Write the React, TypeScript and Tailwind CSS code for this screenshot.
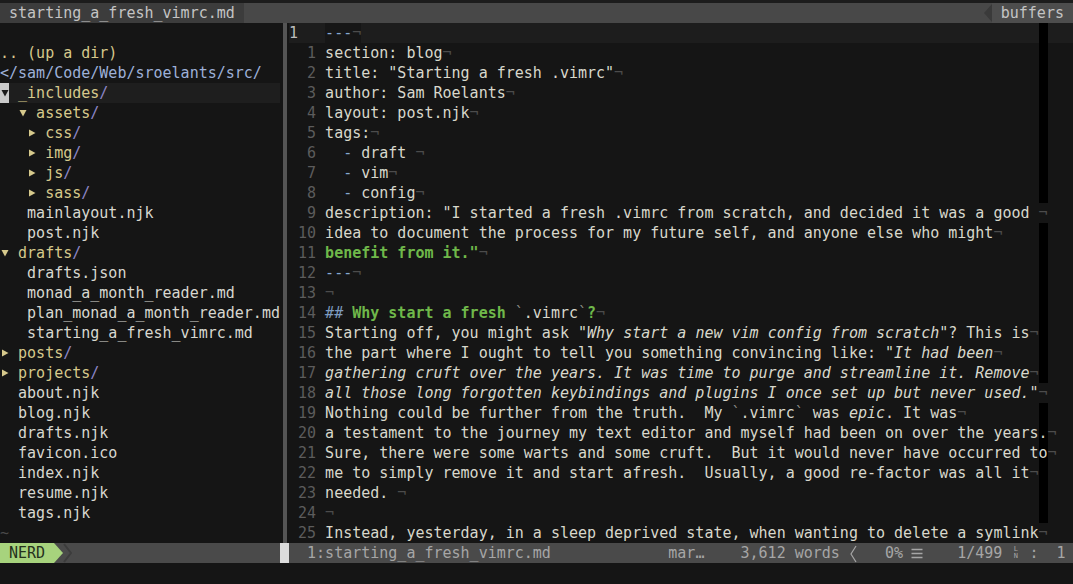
import clsx from "clsx";

type Seg = [string, string];
type Line = string | Seg[];

const tone: Record<string, string> = {
  n: "text-[#d8d8cc]",
  b: "text-[#86a8d0]",
  g: "text-[#6fb84a] font-bold",
  i: "text-[#d8d8cc] italic",
  h: "text-[#7e9cc0]",
  q: "text-[#8c8c86]",
  up: "text-[#d6c98c]",
  path: "text-[#9db0d8]",
  dir: "text-[#d6c98c]",
  slash: "text-[#8d86c6]",
  file: "text-[#d8d8d0]",
  dim: "text-[#4a4a4a]",
};

const lines: Line[] = [
  "section: blog",
  'title: "Starting a fresh .vimrc"',
  "author: Sam Roelants",
  "layout: post.njk",
  "tags:",
  [["n", "  "], ["b", "-"], ["n", " draft "]],
  [["n", "  "], ["b", "-"], ["n", " vim"]],
  [["n", "  "], ["b", "-"], ["n", " config"]],
  'description: "I started a fresh .vimrc from scratch, and decided it was a good ',
  "idea to document the process for my future self, and anyone else who might",
  [["g", 'benefit from it."']],
  [["b", "---"]],
  "",
  [["h", "## "], ["g", "Why start a fresh "], ["q", "`"], ["n", ".vimrc"], ["q", "`"], ["g", "?"]],
  [["n", "Starting off, you might ask "], ["i", '"Why start a new vim config from scratch"'], ["n", "? This is"]],
  [["n", "the part where I ought to tell you something convincing like: "], ["i", '"It had been']],
  [["i", "gathering cruft over the years. It was time to purge and streamline it. Remove"]],
  [["i", 'all those long forgotten keybindings and plugins I once set up but never used."']],
  [
    ["n", "Nothing could be further from the truth.  My "],
    ["q", "`"],
    ["n", ".vimrc"],
    ["q", "`"],
    ["n", " was "],
    ["i", "epic"],
    ["n", ". It was"],
  ],
  "a testament to the journey my text editor and myself had been on over the years.",
  "Sure, there were some warts and some cruft.  But it would never have occurred to",
  "me to simply remove it and start afresh.  Usually, a good re-factor was all it",
  "needed. ",
  "",
  "Instead, yesterday, in a sleep deprived state, when wanting to delete a symlink",
];

type Node = { pad: string; arrow?: "open" | "closed"; name: string; dir?: boolean };

const tree: Node[] = [
  { pad: "  ", arrow: "open", name: "assets", dir: true },
  { pad: "   ", arrow: "closed", name: "css", dir: true },
  { pad: "   ", arrow: "closed", name: "img", dir: true },
  { pad: "   ", arrow: "closed", name: "js", dir: true },
  { pad: "   ", arrow: "closed", name: "sass", dir: true },
  { pad: "   ", name: "mainlayout.njk" },
  { pad: "   ", name: "post.njk" },
  { pad: "", arrow: "open", name: "drafts", dir: true },
  { pad: "   ", name: "drafts.json" },
  { pad: "   ", name: "monad_a_month_reader.md" },
  { pad: "   ", name: "plan_monad_a_month_reader.md" },
  { pad: "   ", name: "starting_a_fresh_vimrc.md" },
  { pad: "", arrow: "closed", name: "posts", dir: true },
  { pad: "", arrow: "closed", name: "projects", dir: true },
  { pad: "  ", name: "about.njk" },
  { pad: "  ", name: "blog.njk" },
  { pad: "  ", name: "drafts.njk" },
  { pad: "  ", name: "favicon.ico" },
  { pad: "  ", name: "index.njk" },
  { pad: "  ", name: "resume.njk" },
  { pad: "  ", name: "tags.njk" },
];

const toSegs = (l: Line): Seg[] => (typeof l === "string" ? [["n", l]] : l);

function Eol() {
  return <span className="text-[#4c4c4c]">¬</span>;
}

function EditorLine({ num, line, current }: { num: string; line: Line; current?: boolean }) {
  const segs = toSegs(line);
  const len = segs.reduce((a, s) => a + s[1].length, 0);
  // colorcolumn disappears where the eol marker lands on it
  const bar = len !== 79;
  return (
    <div
      className={clsx(
        "flex h-[20px] whitespace-pre",
        current && "bg-[#1d1d1d]",
        bar && "bg-[linear-gradient(to_right,transparent_83ch,#000_83ch,#000_84ch,transparent_84ch)]"
      )}
    >
      <span
        className={clsx(
          "w-[4ch] shrink-0",
          current ? "text-[#bcbcbc]" : "text-right pr-[1ch] text-[#5c5c5c]"
        )}
      >
        {num}
      </span>
      <span className={clsx(current && "bg-[#161616]")}>
        {segs.map(([k, t], i) => (
          <span key={i} className={tone[k]}>
            {t}
          </span>
        ))}
        <Eol />
      </span>
    </div>
  );
}

function Arrow({ open, cursor }: { open: boolean; cursor?: boolean }) {
  const fill = cursor ? "#1a1a1a" : "#d6c98c";
  return (
    <span
      className={clsx(
        "inline-flex h-[20px] w-[1ch] items-center justify-center align-top",
        cursor && "bg-[#c9c9c9]"
      )}
    >
      <svg width="8" height="8" viewBox="0 0 8 8">
        {open ? <polygon points="0.5,1 7.5,1 4,7.5" fill={fill} /> : <polygon points="1,0.5 7.5,4 1,7.5" fill={fill} />}
      </svg>
    </span>
  );
}

function NerdTree() {
  return (
    <div className="w-[280px] shrink-0 whitespace-pre">
      <div className="h-[20px]" />
      <div className={clsx("h-[20px]", tone.up)}>.. (up a dir)</div>
      <div className={clsx("h-[20px]", tone.path)}>{"</sam/Code/Web/sroelants/src/"}</div>
      <div className="h-[20px] bg-[#1e1e1e]">
        <Arrow open cursor /> <span className={tone.dir}>_includes</span>
        <span className={tone.slash}>/</span>
      </div>
      {tree.map((n, i) => (
        <div key={i} className="h-[20px]">
          {n.pad}
          {n.arrow && (
            <>
              <Arrow open={n.arrow === "open"} />{" "}
            </>
          )}
          {n.dir ? (
            <>
              <span className={tone.dir}>{n.name}</span>
              <span className={tone.slash}>/</span>
            </>
          ) : (
            <span className={tone.file}>{n.name}</span>
          )}
        </div>
      ))}
      <div className={clsx("h-[20px]", tone.dim)}>~</div>
    </div>
  );
}

function TabLine() {
  return (
    <div className="flex h-[20px] bg-[#484848] text-[#c4c4c4] whitespace-pre">
      <span className="bg-[#3c3c3c]"> starting_a_fresh_vimrc.md </span>
      <span className="flex-1" />
      <svg width="9" height="20" viewBox="0 0 9 20" className="shrink-0">
        <rect width="9" height="20" fill="#484848" />
        <polygon points="9,1 1,10 9,19" fill="#3a3a3a" />
      </svg>
      <span className="bg-[#4d4d4d]"> buffers </span>
    </div>
  );
}

function Cell({ children }: { children: React.ReactNode }) {
  return <span className="inline-flex h-[20px] w-[1ch] items-center justify-center align-top">{children}</span>;
}

function StatusLine() {
  return (
    <div className="flex h-[20px] whitespace-pre">
      <div className="flex w-[280px] shrink-0 bg-[#4a4a4a]">
        <span className="bg-[#a7d37d] text-[#25311c]"> NERD </span>
        <svg width="18" height="20" viewBox="0 0 18 20" className="shrink-0">
          <polygon points="0,0 9,10 0,20" fill="#a7d37d" />
          <polyline points="10,1 17,10 10,19" fill="none" stroke="#3c3c3c" strokeWidth="2" />
        </svg>
      </div>
      <div className="w-[9px] shrink-0 bg-[#dcdcdc]" />
      <div className="flex-1 bg-[#4a4a4a] text-[#a6a6a6]">
        {"  1:starting_a_fresh_vimrc.md             mar"}
        <Cell>…</Cell>
        {"    3,612 words "}
        <Cell>
          <svg width="9" height="20" viewBox="0 0 9 20">
            <polyline points="7,3 2,11 7,19" fill="none" stroke="#a6a6a6" strokeWidth="1.2" />
          </svg>
        </Cell>
        {"   0% "}
        <Cell>
          <svg width="12" height="20" viewBox="0 0 12 20" className="shrink-0">
            <path d="M0.5 6.5h11M0.5 10.5h11M0.5 14.5h11" stroke="#a6a6a6" strokeWidth="1.5" />
          </svg>
        </Cell>
        {"    1/499 "}
        <Cell>
          <span className="flex flex-col items-center text-[7px] leading-[7px]">
            <span>L</span>
            <span>N</span>
          </span>
        </Cell>
        {" :  1"}
      </div>
    </div>
  );
}

export default function App() {
  return (
    <div className="flex h-[584px] w-[1073px] flex-col overflow-hidden bg-[#151515] font-['DejaVu_Sans_Mono',monospace] text-[15px] leading-[20px] text-[#d8d8cc]">
      <div className="h-[3px] shrink-0 bg-[#1c1c1c]" />
      <TabLine />
      <div className="flex h-[520px] shrink-0">
        <NerdTree />
        <div className="w-[9px] shrink-0">
          <div className="ml-[3px] h-full w-[4px] bg-[#555555]" />
        </div>
        <div className="flex-1 overflow-hidden">
          <EditorLine num="1" line={[["b", "---"]]} current />
          {lines.map((l, i) => (
            <EditorLine key={i} num={String(i + 1)} line={l} />
          ))}
        </div>
      </div>
      <StatusLine />
      <div className="flex-1" />
    </div>
  );
}
